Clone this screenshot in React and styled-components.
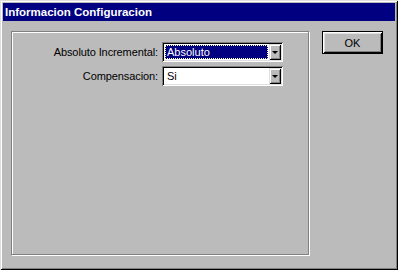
import React from "react";
import styled, { createGlobalStyle } from "styled-components";

const Global = createGlobalStyle`
  html, body { margin: 0; padding: 0; background: #bbbbbb; }
  body { font-family: "Liberation Sans", Arial, sans-serif; font-size: 11px; }
`;

const FACE = "#bbbbbb";

const Window = styled.div`
  width: 398px;
  height: 270px;
  box-sizing: border-box;
  background: ${FACE};
  padding: 3px;
  display: flex;
  flex-direction: column;
  box-shadow: inset 1px 1px 0 #dfdfdf, inset -1px -1px 0 #000,
    inset 2px 2px 0 #fff, inset -2px -2px 0 #808080;
`;

const TitleBar = styled.div`
  height: 18px;
  background: #000080;
  color: #fff;
  font-weight: bold;
  font-size: 11.5px;
  line-height: 18px;
  padding-left: 2px;
  white-space: nowrap;
`;

const Body = styled.div`
  flex: 1;
  display: flex;
  align-items: flex-start;
  padding: 10px 11px 0 8px;
  gap: 13px;
`;

const GroupBox = styled.div`
  width: 298px;
  height: 224px;
  box-sizing: border-box;
  border: 1px solid #808080;
  box-shadow: inset 1px 1px 0 #fff, 1px 1px 0 #fff;
  padding: 10px 0 0 1px;
`;

const FormGrid = styled.div`
  display: grid;
  grid-template-columns: 145px 121px;
  column-gap: 4px;
  row-gap: 4px;
  align-items: center;
`;

const Label = styled.div`
  text-align: right;
  color: #000;
  font-size: 11px;
  letter-spacing: -0.1px;
  white-space: nowrap;
`;

const Combo = styled.div`
  height: 20px;
  box-sizing: border-box;
  padding: 2px;
  background: #fff;
  display: flex;
  box-shadow: inset 1px 1px 0 #808080, inset -1px -1px 0 #fff,
    inset 2px 2px 0 #000, inset -2px -2px 0 #dfdfdf;
`;

const Field = styled.div`
  flex: 1;
  padding: 1px;
  display: flex;
`;

const Value = styled.div`
  flex: 1;
  box-sizing: border-box;
  font-size: 11px;
  line-height: 12px;
  padding-left: 1px;
  color: ${(p) => (p.$focused ? "#fff" : "#000")};
  background: ${(p) => (p.$focused ? "#000080" : "transparent")};
  border: 1px ${(p) => (p.$focused ? "dotted #ffffc0" : "solid transparent")};
`;

const DropButton = styled.div`
  width: 12px;
  background: ${FACE};
  display: flex;
  align-items: center;
  justify-content: center;
  box-shadow: inset 1px 1px 0 #dfdfdf, inset -1px -1px 0 #000,
    inset 2px 2px 0 #fff, inset -2px -2px 0 #808080;
`;

const Arrow = styled.div`
  width: 0;
  height: 0;
  border-left: 3px solid transparent;
  border-right: 3px solid transparent;
  border-top: 3px solid #000;
  margin-top: 1px;
`;

const Button = styled.button`
  width: 61px;
  height: 23px;
  box-sizing: border-box;
  background: ${FACE};
  border: 1px solid #000;
  font-family: "Liberation Sans", Arial, sans-serif;
  font-size: 11px;
  color: #000;
  padding: 0;
  box-shadow: inset 1px 1px 0 #fff, inset -1px -1px 0 #000,
    inset 2px 2px 0 #dfdfdf, inset -2px -2px 0 #808080;
`;

function ComboBox({ value, focused }) {
  return (
    <Combo>
      <Field>
        <Value $focused={focused}>{value}</Value>
      </Field>
      <DropButton>
        <Arrow />
      </DropButton>
    </Combo>
  );
}

export default function App() {
  return (
    <>
      <Global />
      <Window>
        <TitleBar>Informacion Configuracion</TitleBar>
        <Body>
          <GroupBox>
            <FormGrid>
              <Label>Absoluto Incremental:</Label>
              <ComboBox value="Absoluto" focused />
              <Label>Compensacion:</Label>
              <ComboBox value="Si" />
            </FormGrid>
          </GroupBox>
          <Button>OK</Button>
        </Body>
      </Window>
    </>
  );
}
